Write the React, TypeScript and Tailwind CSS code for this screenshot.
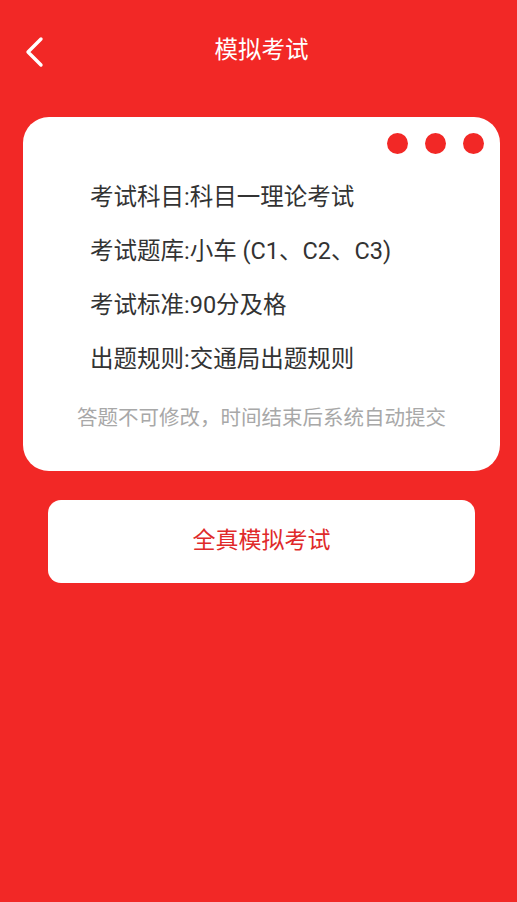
const rows = [
	'考试科目:科目一理论考试',
	'考试题库:小车 (C1、C2、C3)',
	'考试标准:90分及格',
	'出题规则:交通局出题规则',
];

export default function App() {
	return (
		<div
			className="min-h-[902px] w-full bg-[#f22826] flex flex-col"
			style={{ fontFamily: 'Roboto, "Noto Sans CJK SC", sans-serif' }}
		>
			<div className="h-[104px] relative flex items-center justify-center pb-[2px]">
				<button className="absolute left-[22px] top-[35px] w-[24px] h-[34px] flex items-center justify-center">
					<svg width="20" height="32" viewBox="0 0 20 32" fill="none">
						<path
							d="M17 3 L4 16 L17 29"
							stroke="white"
							strokeWidth="3.4"
							strokeLinecap="round"
							strokeLinejoin="round"
						/>
					</svg>
				</button>
				<h1 className="text-white text-[23.5px] leading-none ml-[6px]">模拟考试</h1>
			</div>
			<div className="ml-[23px] mr-[17px] mt-[13px] bg-white rounded-[26px] h-[354px] flex flex-col">
				<div className="flex justify-end gap-[17px] pr-[16px] pt-[16px]">
					<span className="w-[21px] h-[21px] rounded-full bg-[#f22826]" />
					<span className="w-[21px] h-[21px] rounded-full bg-[#f22826]" />
					<span className="w-[21px] h-[21px] rounded-full bg-[#f22826]" />
				</div>
				<ul className="flex flex-col gap-[28px] pl-[67px] mt-[30px]">
					{rows.map((r) => (
						<li key={r} className="text-[23.5px] leading-[26px] text-[#333333]">
							{r}
						</li>
					))}
				</ul>
				<p className="text-center text-[20.5px] leading-none text-[#a8a8a8] mt-[36px]">
					答题不可修改，时间结束后系统自动提交
				</p>
			</div>
			<button className="ml-[48px] mr-[42px] mt-[29px] h-[83px] bg-white rounded-[13px] text-[23px] text-[#e02a2a]">
				全真模拟考试
			</button>
		</div>
	);
}
